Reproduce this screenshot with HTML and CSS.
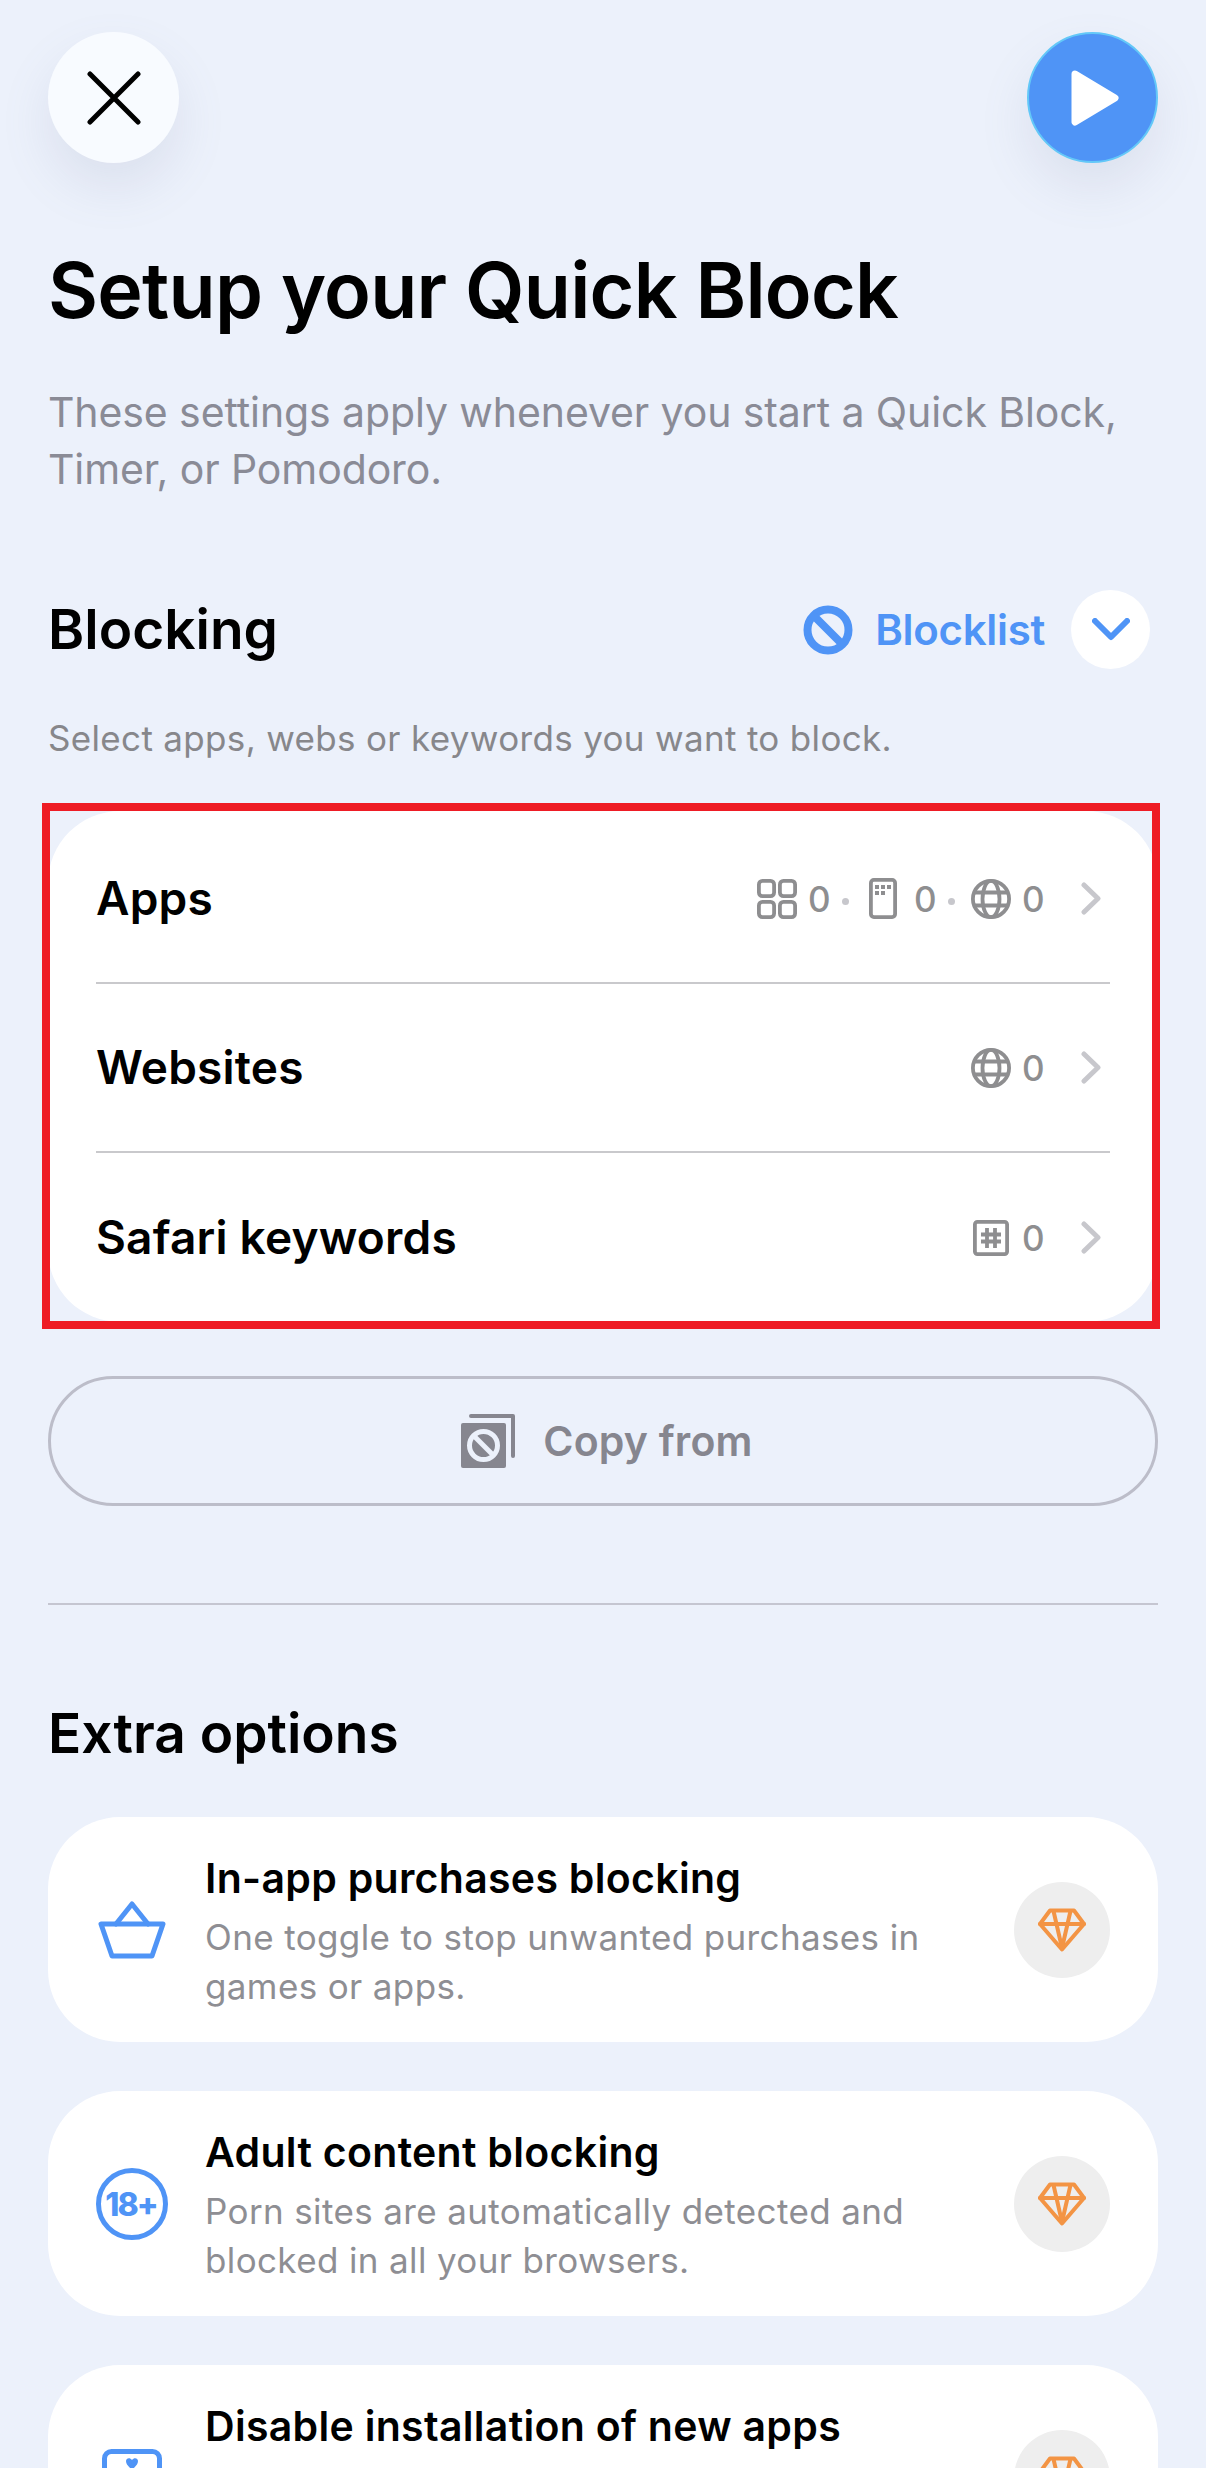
FILE: index.html
```html
<!DOCTYPE html>
<html lang="en">
<head>
    <meta charset="UTF-8">
    <meta name="viewport" content="width=device-width, initial-scale=1.0">
    <title>Setup your Quick Block</title>
    <link rel="stylesheet" href="styles.css">
</head>
<body>
    <div class="page">
        <div class="top-bar">
            <div class="round-btn close-btn">
                <svg width="54" height="54" viewBox="0 0 54 54"><path d="M3 3 L51 51 M51 3 L3 51" stroke="#000" stroke-width="5" stroke-linecap="round" fill="none"/></svg>
            </div>
            <div class="round-btn play-btn">
                <svg width="50" height="56" viewBox="0 0 50 56"><path d="M5 4 L45 28 L5 52 Z" fill="#fff" stroke="#fff" stroke-width="7" stroke-linejoin="round"/></svg>
            </div>
        </div>

        <h1 class="title">Setup your Quick Block</h1>
        <p class="subtitle">These settings apply whenever you start a Quick Block, Timer, or Pomodoro.</p>

        <div class="section-head">
            <h2>Blocking</h2>
            <div class="picker">
                <svg width="50" height="50" viewBox="0 0 50 50"><circle cx="25" cy="25" r="20.5" fill="none" stroke="#4f94f6" stroke-width="8"/><path d="M11 11 L39 39" stroke="#4f94f6" stroke-width="8"/></svg>
                <span class="picker-name">Blocklist</span>
                <div class="picker-toggle">
                    <svg width="38" height="23" viewBox="0 0 38 23"><path d="M3 3 L19 19 L35 3" fill="none" stroke="#4f94f6" stroke-width="6" stroke-linecap="round" stroke-linejoin="round"/></svg>
                </div>
            </div>
        </div>
        <p class="hint">Select apps, webs or keywords you want to block.</p>

        <div class="block-wrap">
            <div class="block-card">
                <div class="block-row">
                    <span class="row-name">Apps</span>
                    <div class="counts">
                        <svg width="40" height="40" viewBox="0 0 40 40" fill="none" stroke="#8e8e90" stroke-width="3.8"><rect x="1.900" y="1.900" width="15.200" height="15.200" rx="3.500"/><rect x="22.900" y="1.900" width="15.200" height="15.200" rx="3.500"/><rect x="1.900" y="22.900" width="15.200" height="15.200" rx="3.500"/><rect x="22.900" y="22.900" width="15.200" height="15.200" rx="3.500"/></svg>
                        <span class="num">0</span>
                        <span class="dot"></span>
                        <svg class="ic-phone" width="28" height="41" viewBox="0 0 28 41"><rect x="1.900" y="1.900" width="24.200" height="37.200" rx="3" fill="none" stroke="#8e8e90" stroke-width="3.800"/><path fill="#8e8e90" d="M6 7h4v4H6zM12 7h4v4h-4zM18 7h4v4h-4zM6 13h4v4H6zM12 13h4v4h-4z"/></svg>
                        <span class="num">0</span>
                        <span class="dot"></span>
                        <svg width="40" height="40" viewBox="0 0 40 40" fill="none" stroke="#8e8e90" stroke-width="3.8"><circle cx="20" cy="20" r="18.100"/><ellipse cx="20" cy="20" rx="8.500" ry="18.100"/><path d="M4 13.500 H36 M4 26.500 H36"/></svg>
                        <span class="num">0</span>
                    </div>
                    <svg class="chev" width="20" height="33" viewBox="0 0 20 33"><path d="M3 3 L17 16.500 L3 30" fill="none" stroke="#c7c7cc" stroke-width="5" stroke-linecap="round" stroke-linejoin="round"/></svg>
                </div>
                <div class="block-row">
                    <span class="row-name">Websites</span>
                    <div class="counts">
                        <svg width="40" height="40" viewBox="0 0 40 40" fill="none" stroke="#8e8e90" stroke-width="3.8"><circle cx="20" cy="20" r="18.100"/><ellipse cx="20" cy="20" rx="8.500" ry="18.100"/><path d="M4 13.500 H36 M4 26.500 H36"/></svg>
                        <span class="num">0</span>
                    </div>
                    <svg class="chev" width="20" height="33" viewBox="0 0 20 33"><path d="M3 3 L17 16.500 L3 30" fill="none" stroke="#c7c7cc" stroke-width="5" stroke-linecap="round" stroke-linejoin="round"/></svg>
                </div>
                <div class="block-row">
                    <span class="row-name">Safari keywords</span>
                    <div class="counts">
                        <svg class="ic-hash" width="36" height="36" viewBox="0 0 36 36"><rect x="1.900" y="1.900" width="32.200" height="32.200" rx="2.500" fill="none" stroke="#8e8e90" stroke-width="3.800"/><path d="M14 8 V28 M22 8 V28 M8 14.500 H28 M8 21.500 H28" stroke="#8e8e90" stroke-width="3.800" fill="none"/></svg>
                        <span class="num">0</span>
                    </div>
                    <svg class="chev" width="20" height="33" viewBox="0 0 20 33"><path d="M3 3 L17 16.500 L3 30" fill="none" stroke="#c7c7cc" stroke-width="5" stroke-linecap="round" stroke-linejoin="round"/></svg>
                </div>
            </div>
            <div class="red-frame"></div>
        </div>

        <div class="copy-btn">
            <svg width="54" height="54" viewBox="0 0 54 54"><path d="M10 2 H52 V42" fill="none" stroke="#86868f" stroke-width="4" stroke-linecap="round" stroke-linejoin="round"/><rect x="0" y="9" width="45" height="45" rx="2" fill="#86868f"/><circle cx="22.500" cy="31.500" r="14" fill="none" stroke="#ecf1fb" stroke-width="5"/><path d="M13 22 L32 41" stroke="#ecf1fb" stroke-width="5"/></svg>
            <span>Copy from</span>
        </div>

        <div class="divider"></div>

        <h2 class="extra-title">Extra options</h2>

        <div class="option">
            <div class="option-icon">
                <svg width="68" height="58" viewBox="0 0 68 58" fill="none" stroke="#4f94f6" stroke-width="5" stroke-linejoin="round"><path d="M3 23 H65 L54 55 H14 Z"/><path d="M18 23 L34 3 L50 23" stroke-linecap="round"/></svg>
            </div>
            <div class="option-text">
                <div class="option-name">In-app purchases blocking</div>
                <div class="option-desc">One toggle to stop unwanted purchases in games or apps.</div>
            </div>
            <div class="gem">
                <svg width="48" height="44" viewBox="0 0 48 44" fill="none" stroke="#f39444" stroke-width="4" stroke-linejoin="round" stroke-linecap="round"><path d="M12 2.500 H36 L46 16 L24 41.500 L2 16 Z"/><path d="M2 16 H46 M15.500 3 L24 40 L32.500 3"/></svg>
            </div>
        </div>

        <div class="option">
            <div class="option-icon">
                <svg width="72" height="72" viewBox="0 0 72 72"><circle cx="36" cy="36" r="33.500" fill="none" stroke="#4f94f6" stroke-width="5"/><text x="35" y="47.500" text-anchor="middle" class="age-text">18+</text></svg>
            </div>
            <div class="option-text">
                <div class="option-name">Adult content blocking</div>
                <div class="option-desc">Porn sites are automatically detected and blocked in all your browsers.</div>
            </div>
            <div class="gem">
                <svg width="48" height="44" viewBox="0 0 48 44" fill="none" stroke="#f39444" stroke-width="4" stroke-linejoin="round" stroke-linecap="round"><path d="M12 2.500 H36 L46 16 L24 41.500 L2 16 Z"/><path d="M2 16 H46 M15.500 3 L24 40 L32.500 3"/></svg>
            </div>
        </div>

        <div class="option">
            <div class="option-icon">
                <svg width="60" height="58" viewBox="0 0 60 58" fill="none" stroke="#4f94f6" stroke-width="5"><rect x="2.500" y="2.500" width="55" height="53" rx="7"/><path d="M30 21 C26 17 24 15 24 12 C24 9 28 8 30 11 C32 8 36 9 36 12 C36 15 34 17 30 21 Z" fill="#4f94f6" stroke="none"/></svg>
            </div>
            <div class="option-text">
                <div class="option-name">Disable installation of new apps</div>
            </div>
            <div class="gem">
                <svg width="48" height="44" viewBox="0 0 48 44" fill="none" stroke="#f39444" stroke-width="4" stroke-linejoin="round" stroke-linecap="round"><path d="M12 2.500 H36 L46 16 L24 41.500 L2 16 Z"/><path d="M2 16 H46 M15.500 3 L24 40 L32.500 3"/></svg>
            </div>
        </div>
    </div>
</body>
</html>
```

FILE: styles.css
```css
html, body {
    margin: 0;
    padding: 0;
    height: 2468px;
    overflow: hidden;
    background: #ecf1fb;
}
body {
    font-family: Inter, "Liberation Sans", sans-serif;
    color: #000;
}
.page {
    padding: 32px 48px 0;
}
.top-bar {
    display: flex;
    justify-content: space-between;
}
.round-btn {
    width: 131px;
    height: 131px;
    border-radius: 50%;
    display: flex;
    align-items: center;
    justify-content: center;
}
.close-btn {
    background: #f8fbff;
    box-shadow: 0 24px 50px rgba(120, 130, 160, 0.14);
}
.play-btn {
    background: #4f94f6;
    border: 2px solid #63c8f8;
    box-sizing: border-box;
    box-shadow: 0 24px 50px rgba(120, 130, 160, 0.14);
}
.play-btn svg {
    margin-left: 4px;
}
.title {
    margin: 81px 0 0;
    font-size: 77px;
    line-height: 92px;
    font-weight: 600;
    letter-spacing: -0.75px;
}
.subtitle {
    margin: 48px 0 0;
    font-size: 41px;
    line-height: 57px;
    letter-spacing: -0.1px;
    color: #8a8b96;
    max-width: 1100px;
}
.section-head {
    display: flex;
    justify-content: space-between;
    align-items: center;
    margin-top: 92px;
}
.section-head h2, .extra-title {
    margin: 0;
    font-size: 55px;
    line-height: 79px;
    font-weight: 600;
}
.picker {
    display: flex;
    align-items: center;
    margin-right: 8px;
}
.picker-name {
    margin-left: 22px;
    font-size: 42px;
    font-weight: 600;
    letter-spacing: -0.3px;
    color: #4f94f6;
}
.picker-toggle {
    width: 79px;
    height: 79px;
    margin-left: 26px;
    border-radius: 50%;
    background: #fff;
    display: flex;
    align-items: center;
    justify-content: center;
}
.hint {
    margin: 49px 0 0;
    font-size: 35px;
    line-height: 41px;
    letter-spacing: 0.33px;
    color: #87878b;
}
.block-wrap {
    position: relative;
    margin-top: 52px;
}
.block-card {
    height: 511px;
    box-sizing: border-box;
    padding: 4px 48px 0;
    background: #fff;
    border-radius: 72px;
}
.block-row {
    height: 169px;
    display: flex;
    align-items: center;
    border-bottom: 2px solid #c9c9cc;
    box-sizing: border-box;
}
.block-row:last-child {
    border-bottom: 0;
}
.row-name {
    flex: 1;
    padding-bottom: 1px;
    font-size: 46px;
    font-weight: 600;
    letter-spacing: 0.2px;
}
.counts {
    display: flex;
    align-items: center;
}
.num {
    margin: 0 1px 0 11px;
    width: 21px;
    text-align: center;
    font-size: 35px;
    font-weight: 500;
    color: #8e8e90;
}
.dot {
    width: 7px;
    height: 7px;
    margin: 6px 16px 0 12px;
    border-radius: 50%;
    background: #c7c7cc;
}
.ic-phone {
    margin-left: 4px;
}
.ic-phone + .num {
    margin-left: 17px;
}
.ic-hash + .num {
    margin-left: 13px;
}
.chev {
    margin: 0 9px 0 37px;
}
.red-frame {
    position: absolute;
    left: -6px;
    right: -2px;
    top: -8px;
    bottom: -7px;
    border: 8px solid #ee1c25;
}
.copy-btn {
    margin-top: 54px;
    height: 130px;
    box-sizing: border-box;
    border: 3px solid #bcbdc9;
    border-radius: 65px;
    padding-left: 8px;
    display: flex;
    align-items: center;
    justify-content: center;
    gap: 28px;
    font-size: 41px;
    font-weight: 600;
    letter-spacing: 0.2px;
    color: #86868f;
}
.divider {
    margin-top: 97px;
    height: 2px;
    background: #c5c6d1;
}
.extra-title {
    margin-top: 89px;
}
.option {
    margin-top: 49px;
    height: 225px;
    box-sizing: border-box;
    padding: 0 48px;
    background: #fff;
    border-radius: 72px;
    display: flex;
    align-items: center;
}
.extra-title + .option {
    margin-top: 44px;
}
.option-icon {
    flex: none;
    width: 72px;
    margin-right: 37px;
    display: flex;
    justify-content: center;
}
.option-text {
    flex: 1;
    align-self: flex-start;
    margin-top: 37px;
}
.option-name {
    font-size: 41px;
    line-height: 49px;
    font-weight: 600;
    letter-spacing: 0.3px;
}
.option-desc {
    margin-top: 10px;
    width: 760px;
    font-size: 35px;
    line-height: 49px;
    letter-spacing: 0.37px;
    color: #8e8e93;
}
.gem {
    flex: none;
    width: 96px;
    height: 96px;
    border-radius: 50%;
    background: #eeeeee;
    display: flex;
    align-items: center;
    justify-content: center;
}
.age-text {
    font-size: 32px;
    font-weight: 800;
    letter-spacing: -2px;
    fill: #4f94f6;
}
```
